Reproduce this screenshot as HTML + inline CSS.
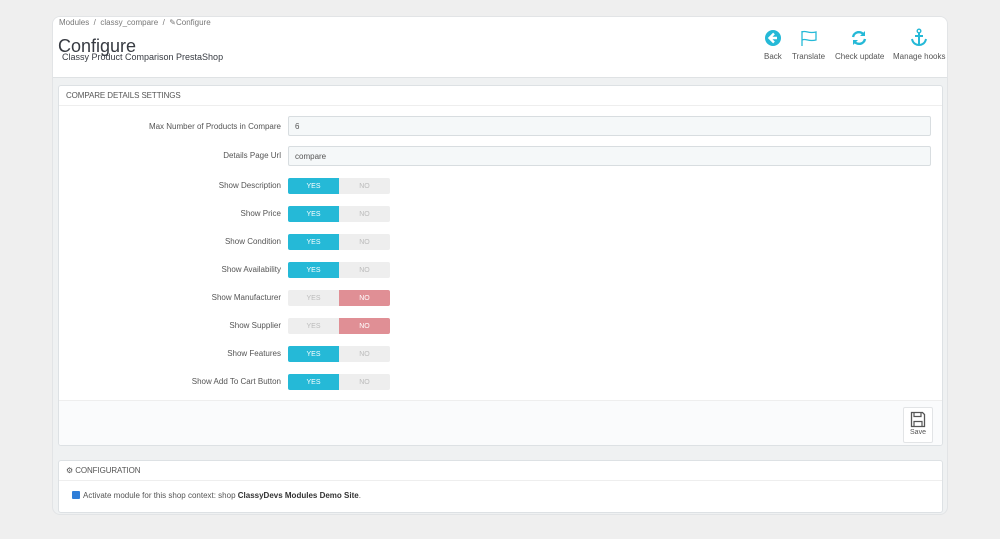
<!DOCTYPE html>
<html><head><meta charset="utf-8"><style>
*{box-sizing:border-box;margin:0;padding:0}
body{width:1000px;height:539px;background:#efefef;font-family:"Liberation Sans",sans-serif;color:#555;position:relative;overflow:hidden}
.card{position:absolute;left:52px;top:16px;width:896px;height:499px;background:#eff1f2;border:1px solid #e2e4e6;border-radius:8px;overflow:hidden}
.hdr{position:absolute;left:0;top:0;width:100%;height:61px;background:#fff;border-bottom:1px solid #dfe2e4}
.a{position:absolute}
.panel{position:absolute;left:5px;width:885px;background:#fff;border:1px solid #dde1e4;border-radius:3px;overflow:hidden}
.ph{height:20px;border-bottom:1px solid #eee;font-size:8px;line-height:20px;padding-left:7px;color:#555;letter-spacing:-.1px}
.lbl{position:absolute;right:661px;font-size:8px;color:#555;text-align:right;white-space:nowrap}
.inp{position:absolute;left:229px;width:643px;height:20px;background:#f5f8f9;border:1px solid #d8dde0;border-radius:2px;font-size:8px;display:flex;align-items:center;padding-left:6px;padding-top:1px;color:#555}
.sw{position:absolute;left:229px;width:102px;height:16px;display:flex;border-radius:2px;overflow:hidden;font-size:7px}
.sw div{flex:1;display:flex;align-items:center;justify-content:center;padding-top:1px}
.y{background:#25b9d7;color:#fff}.n{background:#eeeeee;color:#bbb}
.r{background:#e08f95;color:#fff}
.tb{position:absolute;top:35px;font-size:8px;color:#555;text-align:center;white-space:nowrap}
</style></head><body>
<div class="card">
 <div class="hdr">
  <div class="a" style="left:6px;top:1px;font-size:8px;color:#777">Modules &nbsp;/&nbsp; classy_compare &nbsp;/&nbsp; ✎Configure</div>
  <div class="a" style="left:5px;top:19px;font-size:18px;color:#363a41">Configure</div>
  <div class="a" style="left:9px;top:35px;font-size:9px;color:#363a41">Classy Product Comparison PrestaShop</div>
  <svg class="a" style="left:711px;top:12px" width="18" height="18" viewBox="0 0 18 18"><circle cx="9" cy="9" r="8" fill="#25b9d7"/><path d="M10 4.5 5.5 9 10 13.5M6 9h7" stroke="#fff" stroke-width="2.4" fill="none"/></svg>
  <div class="tb" style="left:711px">Back</div>
  <svg class="a" style="left:747px;top:12px" width="18" height="18" viewBox="0 0 18 18"><path d="M2 2v15M2 3c4-2 6 2 14 0v8c-8 2-10-2-14 0" stroke="#25b9d7" stroke-width="1.3" fill="none"/></svg>
  <div class="tb" style="left:739px">Translate</div>
  <svg class="a" style="left:797px;top:12px" width="18" height="18" viewBox="0 0 18 18"><path d="M3 8a6 6 0 0 1 11-2M15 10a6 6 0 0 1-11 2" stroke="#25b9d7" stroke-width="2.4" fill="none"/><path d="M15 2v5h-5zM3 16v-5h5z" fill="#25b9d7"/></svg>
  <div class="tb" style="left:782px">Check update</div>
  <svg class="a" style="left:857px;top:11px" width="18" height="19" viewBox="0 0 18 19"><circle cx="9" cy="3" r="1.8" stroke="#25b9d7" stroke-width="1.4" fill="none"/><path d="M9 5v12M5 8h8M2 11c1 5 5 6 7 6s6-1 7-6" stroke="#25b9d7" stroke-width="2" fill="none"/></svg>
  <div class="tb" style="left:840px">Manage hooks</div>
 </div>
 <div class="panel" style="top:68px;height:361px">
  <div class="ph">COMPARE DETAILS SETTINGS</div>
  <div class="lbl" style="top:36px">Max Number of Products in Compare</div>
  <div class="inp" style="top:30px">6</div>
  <div class="lbl" style="top:65px">Details Page Url</div>
  <div class="inp" style="top:60px">compare</div>
  <div class="lbl" style="top:95px">Show Description</div><div class="sw" style="top:92px"><div class="y">YES</div><div class="n">NO</div></div>
  <div class="lbl" style="top:123px">Show Price</div><div class="sw" style="top:120px"><div class="y">YES</div><div class="n">NO</div></div>
  <div class="lbl" style="top:151px">Show Condition</div><div class="sw" style="top:148px"><div class="y">YES</div><div class="n">NO</div></div>
  <div class="lbl" style="top:179px">Show Availability</div><div class="sw" style="top:176px"><div class="y">YES</div><div class="n">NO</div></div>
  <div class="lbl" style="top:207px">Show Manufacturer</div><div class="sw" style="top:204px"><div class="n">YES</div><div class="r">NO</div></div>
  <div class="lbl" style="top:235px">Show Supplier</div><div class="sw" style="top:232px"><div class="n">YES</div><div class="r">NO</div></div>
  <div class="lbl" style="top:263px">Show Features</div><div class="sw" style="top:260px"><div class="y">YES</div><div class="n">NO</div></div>
  <div class="lbl" style="top:291px">Show Add To Cart Button</div><div class="sw" style="top:288px"><div class="y">YES</div><div class="n">NO</div></div>
  <div class="a" style="left:0;top:314px;width:100%;height:46px;background:#fafbfc;border-top:1px solid #eee">
   <div class="a" style="left:844px;top:6px;width:30px;height:36px;background:#fff;border:1px solid #e2e4e6;border-radius:2px;text-align:center;font-size:7px;color:#555">
    <svg width="16" height="17" viewBox="0 0 16 17" style="margin-top:3px"><path d="M1.5 1.5h11l2 2v12h-13z" stroke="#555" stroke-width="1.3" fill="none"/><path d="M4 1.5v4h7v-4M4 15.5v-5h8v5" stroke="#555" stroke-width="1.2" fill="none"/></svg>
    <div style="margin-top:-1px">Save</div></div>
  </div>
 </div>
 <div class="panel" style="top:443px;height:53px">
  <div class="ph">⚙ CONFIGURATION</div>
  <div class="a" style="left:13px;top:30px;width:8px;height:8px;background:#2f7ed8;border-radius:1px"></div>
  <div class="a" style="left:24px;top:30px;font-size:8px;color:#555">Activate module for this shop context: shop <b style="color:#333">ClassyDevs Modules Demo Site</b>.</div>
 </div>
</div>
</body></html>
